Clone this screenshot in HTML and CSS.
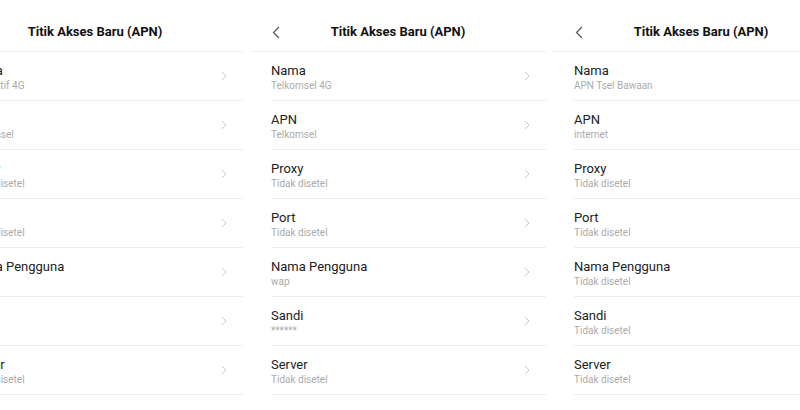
FILE: index.html
```html
<!DOCTYPE html>
<html lang="id">
<head>
    <meta charset="UTF-8">
    <title>Titik Akses Baru (APN)</title>
    <link rel="stylesheet" href="styles.css">
</head>
<body>
    <div class="layar">
        <!-- layar 1 -->
        <div class="panel">
            <div class="header">
                <svg class="kembali" width="8" height="13" viewBox="0 0 8 13"><path d="M7 1 1.5 6.5 7 12" fill="none" stroke="#555" stroke-width="1.2"/></svg>
                <h2>Titik Akses Baru (APN)</h2>
            </div>
            <div class="item"><div class="teks"><div class="judul">Nama</div><div class="nilai">Tsel Aktif 4G</div></div><svg class="panah" width="6" height="10" viewBox="0 0 6 10"><path d="M1 1 5 5 1 9" fill="none" stroke="#c8c8c8" stroke-width="1"/></svg></div>
            <div class="item"><div class="teks"><div class="judul">APN</div><div class="nilai">Telkomsel</div></div><svg class="panah" width="6" height="10" viewBox="0 0 6 10"><path d="M1 1 5 5 1 9" fill="none" stroke="#c8c8c8" stroke-width="1"/></svg></div>
            <div class="item"><div class="teks"><div class="judul">Proxy</div><div class="nilai">Tidak disetel</div></div><svg class="panah" width="6" height="10" viewBox="0 0 6 10"><path d="M1 1 5 5 1 9" fill="none" stroke="#c8c8c8" stroke-width="1"/></svg></div>
            <div class="item"><div class="teks"><div class="judul">Port</div><div class="nilai">Tidak disetel</div></div><svg class="panah" width="6" height="10" viewBox="0 0 6 10"><path d="M1 1 5 5 1 9" fill="none" stroke="#c8c8c8" stroke-width="1"/></svg></div>
            <div class="item"><div class="teks"><div class="judul">Nama Pengguna</div><div class="nilai">wap</div></div><svg class="panah" width="6" height="10" viewBox="0 0 6 10"><path d="M1 1 5 5 1 9" fill="none" stroke="#c8c8c8" stroke-width="1"/></svg></div>
            <div class="item"><div class="teks"><div class="judul">Sandi</div><div class="nilai">******</div></div><svg class="panah" width="6" height="10" viewBox="0 0 6 10"><path d="M1 1 5 5 1 9" fill="none" stroke="#c8c8c8" stroke-width="1"/></svg></div>
            <div class="item"><div class="teks"><div class="judul">Server</div><div class="nilai">Tidak disetel</div></div><svg class="panah" width="6" height="10" viewBox="0 0 6 10"><path d="M1 1 5 5 1 9" fill="none" stroke="#c8c8c8" stroke-width="1"/></svg></div>
        </div>

        <!-- layar 2 -->
        <div class="panel">
            <div class="header">
                <svg class="kembali" width="8" height="13" viewBox="0 0 8 13"><path d="M7 1 1.5 6.5 7 12" fill="none" stroke="#555" stroke-width="1.2"/></svg>
                <h2>Titik Akses Baru (APN)</h2>
            </div>
            <div class="item"><div class="teks"><div class="judul">Nama</div><div class="nilai">Telkomsel 4G</div></div><svg class="panah" width="6" height="10" viewBox="0 0 6 10"><path d="M1 1 5 5 1 9" fill="none" stroke="#c8c8c8" stroke-width="1"/></svg></div>
            <div class="item"><div class="teks"><div class="judul">APN</div><div class="nilai">Telkomsel</div></div><svg class="panah" width="6" height="10" viewBox="0 0 6 10"><path d="M1 1 5 5 1 9" fill="none" stroke="#c8c8c8" stroke-width="1"/></svg></div>
            <div class="item"><div class="teks"><div class="judul">Proxy</div><div class="nilai">Tidak disetel</div></div><svg class="panah" width="6" height="10" viewBox="0 0 6 10"><path d="M1 1 5 5 1 9" fill="none" stroke="#c8c8c8" stroke-width="1"/></svg></div>
            <div class="item"><div class="teks"><div class="judul">Port</div><div class="nilai">Tidak disetel</div></div><svg class="panah" width="6" height="10" viewBox="0 0 6 10"><path d="M1 1 5 5 1 9" fill="none" stroke="#c8c8c8" stroke-width="1"/></svg></div>
            <div class="item"><div class="teks"><div class="judul">Nama Pengguna</div><div class="nilai">wap</div></div><svg class="panah" width="6" height="10" viewBox="0 0 6 10"><path d="M1 1 5 5 1 9" fill="none" stroke="#c8c8c8" stroke-width="1"/></svg></div>
            <div class="item"><div class="teks"><div class="judul">Sandi</div><div class="nilai">******</div></div><svg class="panah" width="6" height="10" viewBox="0 0 6 10"><path d="M1 1 5 5 1 9" fill="none" stroke="#c8c8c8" stroke-width="1"/></svg></div>
            <div class="item"><div class="teks"><div class="judul">Server</div><div class="nilai">Tidak disetel</div></div><svg class="panah" width="6" height="10" viewBox="0 0 6 10"><path d="M1 1 5 5 1 9" fill="none" stroke="#c8c8c8" stroke-width="1"/></svg></div>
        </div>

        <!-- layar 3 -->
        <div class="panel">
            <div class="header">
                <svg class="kembali" width="8" height="13" viewBox="0 0 8 13"><path d="M7 1 1.5 6.5 7 12" fill="none" stroke="#555" stroke-width="1.2"/></svg>
                <h2>Titik Akses Baru (APN)</h2>
            </div>
            <div class="item"><div class="teks"><div class="judul">Nama</div><div class="nilai">APN Tsel Bawaan</div></div><svg class="panah" width="6" height="10" viewBox="0 0 6 10"><path d="M1 1 5 5 1 9" fill="none" stroke="#c8c8c8" stroke-width="1"/></svg></div>
            <div class="item"><div class="teks"><div class="judul">APN</div><div class="nilai">internet</div></div><svg class="panah" width="6" height="10" viewBox="0 0 6 10"><path d="M1 1 5 5 1 9" fill="none" stroke="#c8c8c8" stroke-width="1"/></svg></div>
            <div class="item"><div class="teks"><div class="judul">Proxy</div><div class="nilai">Tidak disetel</div></div><svg class="panah" width="6" height="10" viewBox="0 0 6 10"><path d="M1 1 5 5 1 9" fill="none" stroke="#c8c8c8" stroke-width="1"/></svg></div>
            <div class="item"><div class="teks"><div class="judul">Port</div><div class="nilai">Tidak disetel</div></div><svg class="panah" width="6" height="10" viewBox="0 0 6 10"><path d="M1 1 5 5 1 9" fill="none" stroke="#c8c8c8" stroke-width="1"/></svg></div>
            <div class="item"><div class="teks"><div class="judul">Nama Pengguna</div><div class="nilai">Tidak disetel</div></div><svg class="panah" width="6" height="10" viewBox="0 0 6 10"><path d="M1 1 5 5 1 9" fill="none" stroke="#c8c8c8" stroke-width="1"/></svg></div>
            <div class="item"><div class="teks"><div class="judul">Sandi</div><div class="nilai">Tidak disetel</div></div><svg class="panah" width="6" height="10" viewBox="0 0 6 10"><path d="M1 1 5 5 1 9" fill="none" stroke="#c8c8c8" stroke-width="1"/></svg></div>
            <div class="item"><div class="teks"><div class="judul">Server</div><div class="nilai">Tidak disetel</div></div><svg class="panah" width="6" height="10" viewBox="0 0 6 10"><path d="M1 1 5 5 1 9" fill="none" stroke="#c8c8c8" stroke-width="1"/></svg></div>
        </div>
    </div>
</body>
</html>
```

FILE: styles.css
```css
body {
    margin: 0;
    background: #fff;
    overflow: hidden;
    font-family: Roboto, "Noto Sans", Arial, sans-serif;
    color: #1c1c1c;
}
.layar {
    display: flex;
    gap: 7px;
    margin-left: -53px;
    width: 910px;
}
.panel {
    width: 296px;
    flex-shrink: 0;
    background: #fff;
}
.header {
    height: 52px;
    box-sizing: border-box;
    padding-top: 12px;
    border-bottom: 1px solid #efefef;
    display: flex;
    align-items: center;
    position: relative;
}
.header h2 {
    margin: 0;
    width: 100%;
    height: 40px;
    line-height: 40px;
    text-align: center;
    font-size: 13px;
    font-weight: bold;
    color: #111;
}
.kembali {
    position: absolute;
    left: 22px;
    top: 26px;
}
.item {
    margin-left: 21px;
    padding: 11px 16px 7px 0;
    border-bottom: 1px solid #ececec;
    display: flex;
    align-items: center;
    justify-content: space-between;
}
.judul {
    font-size: 13px;
    line-height: 16px;
    color: #222;
}
.nilai {
    font-size: 10px;
    line-height: 14px;
    color: #ababab;
}
.panah {
    margin-top: -4px;
}
```
